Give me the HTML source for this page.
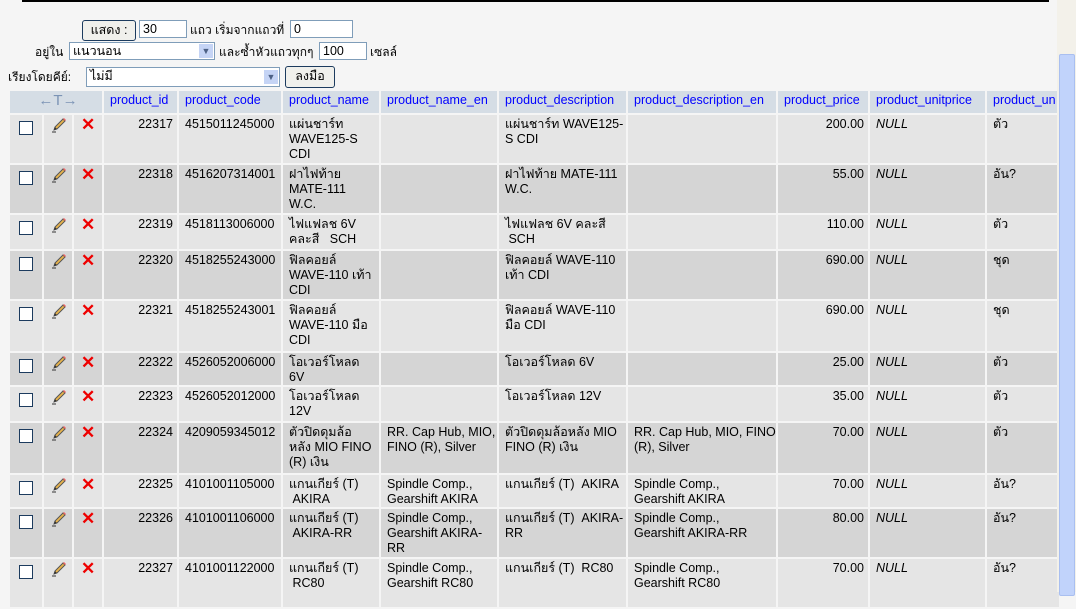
<!DOCTYPE html>
<html><head><meta charset="utf-8"><style>
body{margin:0;background:#f5f5f5;font-family:"Liberation Sans","Noto Sans CJK SC",sans-serif;font-size:13px;color:#000;width:1076px;height:592px;overflow:hidden;position:relative}
.topline{position:absolute;left:22px;top:0;width:1027px;height:2px;background:#000}
.sb{position:absolute;left:1057px;top:0;width:19px;height:592px;background:#f3f1ea}
.thumb{position:absolute;left:1059px;top:54px;width:14px;height:540px;background:#c1d3fb;border:1px solid #a9bff0;border-radius:2px}
.f{position:absolute;font-size:12px;line-height:16px;white-space:nowrap}
.btn{position:absolute;border:1px solid #1c3b5e;border-radius:3px;background:#f0f0ec;text-align:center;font-size:12.5px;line-height:18px}
.inp{position:absolute;border:1px solid #7f9db9;background:#fff;height:18px;line-height:17px;padding-left:3px;box-sizing:border-box;font-size:12.5px}
.sel .arr{position:absolute;right:1px;top:1px;width:14px;height:14px;background:#c5d4f5;font-size:9px;text-align:center;line-height:14px;color:#4d6185}
table{position:absolute;left:8px;top:89px;width:1053px;border-collapse:separate;border-spacing:2px;table-layout:fixed}
td,th{padding:2px 2px 0 6px;vertical-align:top;line-height:15px;font-size:12.5px;overflow:hidden;white-space:nowrap}
th{background:#d5dde5;color:#0000ff;font-weight:normal;height:20px;padding-top:2px;text-align:left}
tr.a td{background:#e5e5e5}tr.b td{background:#d5d5d5}
.r{text-align:right;padding-right:4px}.n{font-style:italic}
.cb{display:inline-block;width:12px;height:12px;border:1px solid #1c3b5e;background:#fff;margin:4px 0 0 3px}
.x{color:#e00;font-size:17px;font-weight:bold;line-height:15px;padding-left:7px}
td.p{padding-left:7px}
</style></head><body>
<svg width="0" height="0" style="position:absolute"><defs><symbol id="pen" viewBox="0 0 16 16"><path d="M3 13 L4 10 L12 2 L14 4 L6 12 Z" fill="#e9b44c" stroke="#555" stroke-width="1"/><path d="M12 2 L14 4 L15 3 L13 1Z" fill="#e66"/><path d="M3 13 L4 10 L6 12Z" fill="#333"/><path d="M1 15 L5 15" stroke="#333"/></symbol></defs></svg>
<div class="topline"></div>
<div class="btn" style="left:82px;top:20px;width:52px;height:19px">แสดง :</div>
<div class="inp" style="left:139px;top:20px;width:48px">30</div>
<div class="f" style="left:190px;top:22px">แถว เริ่มจากแถวที่</div>
<div class="inp" style="left:290px;top:20px;width:63px">0</div>
<div class="f" style="left:35px;top:44px">อยู่ใน</div>
<div class="inp sel" style="left:69px;top:42px;width:146px">แนวนอน<div class="arr">▼</div></div>
<div class="f" style="left:219px;top:44px">และซ้ำหัวแถวทุกๆ</div>
<div class="inp" style="left:319px;top:42px;width:48px">100</div>
<div class="f" style="left:370px;top:44px">เซลล์</div>
<div class="f" style="left:8px;top:69px">เรียงโดยคีย์:</div>
<div class="inp sel" style="left:86px;top:67px;width:194px;height:20px">ไม่มี<div class="arr" style="top:2px">▼</div></div>
<div class="btn" style="left:285px;top:66px;width:48px;height:20px">ลงมือ</div>
<table>
<colgroup><col style="width:32px"><col style="width:28px"><col style="width:28px"><col style="width:73px"><col style="width:102px"><col style="width:96px"><col style="width:116px"><col style="width:127px"><col style="width:148px"><col style="width:90px"><col style="width:115px"><col style="width:72px"></colgroup>
<tr><th colspan="3" style="color:#7b93b5;font-size:15px;text-align:center">←T→</th><th>product_id</th><th>product_code</th><th>product_name</th><th>product_name_en</th><th>product_description</th><th>product_description_en</th><th>product_price</th><th>product_unitprice</th><th>product_un</th></tr>
<tr class="a" style="height:48px"><td><span class="cb"></span></td><td class="p"><svg width="16" height="16"><use href="#pen"/></svg></td><td class="x">✕</td><td class="r">22317</td><td>4515011245000</td><td>แผ่นชาร์ท<br>WAVE125-S<br>CDI</td><td></td><td>แผ่นชาร์ท WAVE125-<br>S CDI</td><td></td><td class="r">200.00</td><td class="n">NULL</td><td>ตัว</td></tr>
<tr class="b" style="height:48px"><td><span class="cb"></span></td><td class="p"><svg width="16" height="16"><use href="#pen"/></svg></td><td class="x">✕</td><td class="r">22318</td><td>4516207314001</td><td>ฝาไฟท้าย<br>MATE-111<br>W.C.</td><td></td><td>ฝาไฟท้าย MATE-111<br>W.C.</td><td></td><td class="r">55.00</td><td class="n">NULL</td><td>อัน?</td></tr>
<tr class="a" style="height:34px"><td><span class="cb"></span></td><td class="p"><svg width="16" height="16"><use href="#pen"/></svg></td><td class="x">✕</td><td class="r">22319</td><td>4518113006000</td><td>ไฟแฟลช 6V<br>คละสี &nbsp;&nbsp;SCH</td><td></td><td>ไฟแฟลช 6V คละสี<br>&nbsp;SCH</td><td></td><td class="r">110.00</td><td class="n">NULL</td><td>ตัว</td></tr>
<tr class="b" style="height:48px"><td><span class="cb"></span></td><td class="p"><svg width="16" height="16"><use href="#pen"/></svg></td><td class="x">✕</td><td class="r">22320</td><td>4518255243000</td><td>ฟิลคอยล์<br>WAVE-110 เท้า<br>CDI</td><td></td><td>ฟิลคอยล์ WAVE-110<br>เท้า CDI</td><td></td><td class="r">690.00</td><td class="n">NULL</td><td>ชุด</td></tr>
<tr class="a" style="height:50px"><td><span class="cb"></span></td><td class="p"><svg width="16" height="16"><use href="#pen"/></svg></td><td class="x">✕</td><td class="r">22321</td><td>4518255243001</td><td>ฟิลคอยล์<br>WAVE-110 มือ<br>CDI</td><td></td><td>ฟิลคอยล์ WAVE-110<br>มือ CDI</td><td></td><td class="r">690.00</td><td class="n">NULL</td><td>ชุด</td></tr>
<tr class="b" style="height:32px"><td><span class="cb"></span></td><td class="p"><svg width="16" height="16"><use href="#pen"/></svg></td><td class="x">✕</td><td class="r">22322</td><td>4526052006000</td><td>โอเวอร์โหลด<br>6V</td><td></td><td>โอเวอร์โหลด 6V</td><td></td><td class="r">25.00</td><td class="n">NULL</td><td>ตัว</td></tr>
<tr class="a" style="height:34px"><td><span class="cb"></span></td><td class="p"><svg width="16" height="16"><use href="#pen"/></svg></td><td class="x">✕</td><td class="r">22323</td><td>4526052012000</td><td>โอเวอร์โหลด<br>12V</td><td></td><td>โอเวอร์โหลด 12V</td><td></td><td class="r">35.00</td><td class="n">NULL</td><td>ตัว</td></tr>
<tr class="b" style="height:50px"><td><span class="cb"></span></td><td class="p"><svg width="16" height="16"><use href="#pen"/></svg></td><td class="x">✕</td><td class="r">22324</td><td>4209059345012</td><td>ตัวปิดดุมล้อ<br>หลัง MIO FINO<br>(R) เงิน</td><td>RR. Cap Hub, MIO,<br>FINO (R), Silver</td><td>ตัวปิดดุมล้อหลัง MIO<br>FINO (R) เงิน</td><td>RR. Cap Hub, MIO, FINO<br>(R), Silver</td><td class="r">70.00</td><td class="n">NULL</td><td>ตัว</td></tr>
<tr class="a" style="height:32px"><td><span class="cb"></span></td><td class="p"><svg width="16" height="16"><use href="#pen"/></svg></td><td class="x">✕</td><td class="r">22325</td><td>4101001105000</td><td>แกนเกียร์ (T)<br>&nbsp;AKIRA</td><td>Spindle Comp.,<br>Gearshift AKIRA</td><td>แกนเกียร์ (T) &nbsp;AKIRA</td><td>Spindle Comp.,<br>Gearshift AKIRA</td><td class="r">70.00</td><td class="n">NULL</td><td>อัน?</td></tr>
<tr class="b" style="height:48px"><td><span class="cb"></span></td><td class="p"><svg width="16" height="16"><use href="#pen"/></svg></td><td class="x">✕</td><td class="r">22326</td><td>4101001106000</td><td>แกนเกียร์ (T)<br>&nbsp;AKIRA-RR</td><td>Spindle Comp.,<br>Gearshift AKIRA-<br>RR</td><td>แกนเกียร์ (T) &nbsp;AKIRA-<br>RR</td><td>Spindle Comp.,<br>Gearshift AKIRA-RR</td><td class="r">80.00</td><td class="n">NULL</td><td>อัน?</td></tr>
<tr class="a" style="height:48px"><td><span class="cb"></span></td><td class="p"><svg width="16" height="16"><use href="#pen"/></svg></td><td class="x">✕</td><td class="r">22327</td><td>4101001122000</td><td>แกนเกียร์ (T)<br>&nbsp;RC80</td><td>Spindle Comp.,<br>Gearshift RC80</td><td>แกนเกียร์ (T) &nbsp;RC80</td><td>Spindle Comp.,<br>Gearshift RC80</td><td class="r">70.00</td><td class="n">NULL</td><td>อัน?</td></tr>
</table>
<div class="sb"></div><div class="thumb"></div>
</body></html>
